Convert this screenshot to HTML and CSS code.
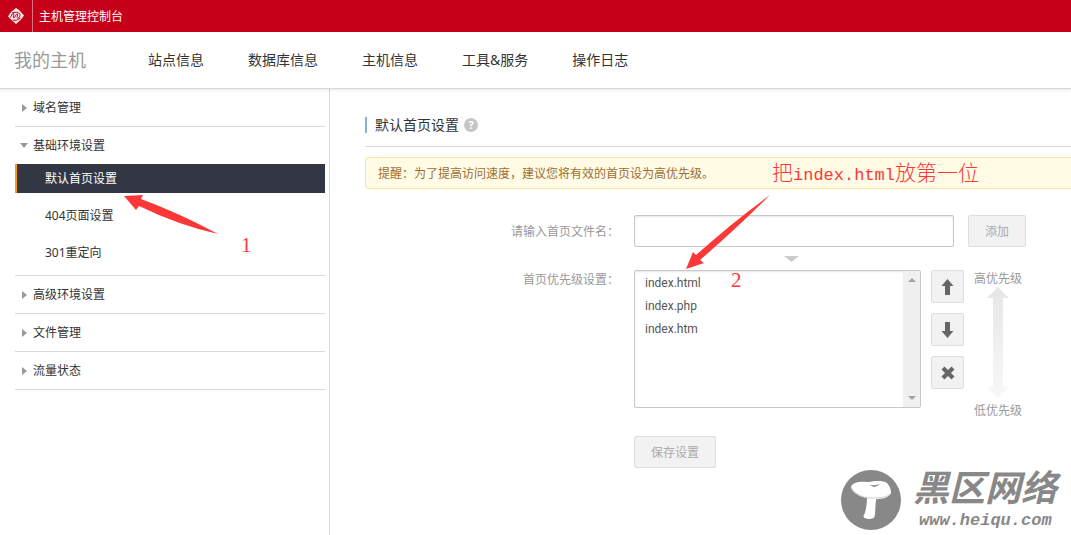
FILE: index.html
```html
<!DOCTYPE html>
<html lang="zh-CN">
<head>
<meta charset="utf-8">
<title>主机管理控制台</title>
<link rel="stylesheet" href="styles.css">
</head>
<body>
<header class="topbar">
  <a class="logo" href="#" aria-label="首页">
    <svg width="16" height="16" viewBox="0 0 16 16" aria-hidden="true"><path d="M8 0l3 2 5 5.500-3 4L8 16l-4-3.500L0 8.500 3 4z" fill="#fbe9eb"/><path d="M2.500 9.500q1.500-4.500 3-4c1.200.6-1 4.500.3 4.500s2-4.500 3.400-4-1.200 4.200.4 4.200 2.600-2 2.400-3.700q-.8-2-3.500-2.200T4 5M4.500 12.200q4 1 8-2" fill="none" stroke="#c70019"/></svg>
  </a>
  <span class="topbar-title">主机管理控制台</span>
</header>
<nav class="mainnav">
  <span class="mainnav-title">我的主机</span>
  <a href="#">站点信息</a>
  <a href="#">数据库信息</a>
  <a href="#">主机信息</a>
  <a href="#">工具&amp;服务</a>
  <a href="#">操作日志</a>
</nav>
<div class="layout">
  <aside class="sidebar">
    <section class="group"><button class="group-head" type="button"><i class="caret"></i>域名管理</button></section>
    <section class="group">
      <button class="group-head" type="button"><i class="caret caret-open"></i>基础环境设置</button>
      <div class="submenu">
        <a class="active" href="#">默认首页设置</a>
        <a href="#">404页面设置</a>
        <a href="#">301重定向</a>
      </div>
    </section>
    <section class="group"><button class="group-head" type="button"><i class="caret"></i>高级环境设置</button></section>
    <section class="group"><button class="group-head" type="button"><i class="caret"></i>文件管理</button></section>
    <section class="group"><button class="group-head" type="button"><i class="caret"></i>流量状态</button></section>
  </aside>
  <main class="content">
    <div class="heading">
      <h1>默认首页设置</h1>
      <button class="help" type="button" aria-label="帮助">?</button>
    </div>
    <p class="notice">提醒：为了提高访问速度，建议您将有效的首页设为高优先级。</p>
    <form class="form">
      <label for="filename">请输入首页文件名：</label>
      <div class="row">
        <input class="textbox" id="filename" type="text">
        <button class="btn btn-add" type="button">添加</button>
      </div>
      <div class="pointer"><svg width="15" height="6" viewBox="0 0 15 6" aria-hidden="true"><path d="M0 0h15L7.500 6z" fill="#ccc"/></svg></div>
      <label for="priority">首页优先级设置：</label>
      <div class="priority">
        <div class="listbox">
          <select id="priority" size="5">
            <option>index.html</option>
            <option>index.php</option>
            <option>index.htm</option>
          </select>
          <div class="track">
            <svg width="8" height="4" viewBox="0 0 8 4" aria-hidden="true"><path d="M0 4h8L4 0z" fill="#a3a3a3"/></svg>
            <svg width="8" height="4" viewBox="0 0 8 4" aria-hidden="true"><path d="M0 0h8L4 4z" fill="#a3a3a3"/></svg>
          </div>
        </div>
        <div class="tools">
          <button class="tool" type="button" aria-label="上移"><svg width="13" height="16" viewBox="0 0 13 16"><path d="M6.500 0L12.500 7H9v9H4V7H.5z" fill="#666"/></svg></button>
          <button class="tool" type="button" aria-label="下移"><svg width="13" height="16" viewBox="0 0 13 16"><path d="M6.500 16L12.500 9H9V0H4v9H.5z" fill="#666"/></svg></button>
          <button class="tool" type="button" aria-label="删除"><svg width="14" height="14" viewBox="0 0 14 14"><path d="M2 2l10 10m0-10L2 12" stroke="#666" stroke-width="4.200"/></svg></button>
        </div>
        <div class="scale">
          <span>高优先级</span>
          <svg width="22" height="111" viewBox="0 0 22 111" aria-hidden="true"><defs><linearGradient id="fade" x1="0" y1="0" x2="0" y2="1"><stop offset="0" stop-color="#e6e6e6"/><stop offset="1" stop-color="#f8f8f8"/></linearGradient></defs><path d="M11 0l11 11h-6v89h6l-11 11-11-11h6V11H0z" fill="url(#fade)"/></svg>
          <span>低优先级</span>
        </div>
      </div>
      <div class="actions"><button class="btn btn-save" type="button">保存设置</button></div>
    </form>
  </main>
</div>
<svg class="arrow arrow-one" width="94" height="41" viewBox="0 0 94 41" aria-hidden="true"><path d="M0 1l19-1-2 4q38 14 77 35Q54 30 15 11l-3 4z" fill="#fc3737"/></svg>
<span class="note note-one">1</span>
<svg class="arrow arrow-two" width="84" height="74" viewBox="0 0 84 74" aria-hidden="true"><path d="M0 74l7-17 3 3Q48 26 84 0 52 32 14 65l4 3z" fill="#fc3737"/></svg>
<span class="note note-text">把<span class="mono">index.html</span>放第一位</span>
<span class="note note-two">2</span>
<div class="watermark">
  <svg width="60" height="60" viewBox="0 0 60 60" aria-hidden="true"><circle cx="30" cy="30" r="30" fill="#888"/><path d="M26 26c0 9-1 15-3.500 20-.5 3.500 9.500 4 11 1 1.500-6 0-12 2.500-21z" fill="#fff"/><path d="M10 17c1-5 9-6 17-5 6-1 15-2 19 1 3 3 4 7 4 10-2 5-9 6-15 6-12 0-24-5-25-12z" fill="#fff"/><path d="M10.500 18c4 7 12 10 21 10 9 0 15-1 18-4" fill="none" stroke="#ccc" stroke-width="1"/><path d="M28 15q6 1 11-1-3 3-6 3z" fill="#888"/></svg>
  <div class="watermark-text"><strong>黑区网络</strong><span>www.heiqu.com</span></div>
</div>
</body>
</html>
```

FILE: styles.css
```css
* { box-sizing: border-box; }
body {
  margin: 0;
  min-height: 100vh;
  position: relative;
  display: flex;
  flex-direction: column;
  overflow: hidden;
  background: #fff;
  color: #333;
  font: 12px/20px "Noto Sans", "Noto Sans CJK SC", sans-serif;
}
a { color: inherit; text-decoration: none; }
button, input, select { font: inherit; color: inherit; margin: 0; }
button { padding: 0; border: 0; background: none; cursor: pointer; }

.topbar { display: flex; align-items: center; height: 32px; background: #c70019; color: #fff; }
.logo { display: flex; align-items: center; justify-content: center; width: 33px; height: 32px; border-right: 1px solid #e0737f; }
.topbar-title { margin-left: 6px; padding-top: 2px; }

.mainnav {
  display: flex;
  align-items: center;
  gap: 44px;
  height: 57px;
  padding-left: 14px;
  border-bottom: 1px solid #d9d9d9;
  box-shadow: 0 1px 3px rgba(0, 0, 0, .1);
  font-size: 14px;
  z-index: 1;
}
.mainnav-title { margin-right: 18px; color: #999; font-size: 18px; }

.layout { display: flex; flex: 1; }
.sidebar { width: 330px; flex: none; padding: 0 4px 0 15px; border-right: 1px solid #d9d9d9; }
.group { border-bottom: 1px solid #d9d9d9; }
.group-head { display: flex; align-items: center; width: 100%; height: 37px; padding-left: 5px; text-align: left; }
.caret { display: flex; justify-content: center; width: 8px; margin-right: 5px; }
.caret::before { content: ""; border: 4px solid transparent; border-left: 5px solid #999; border-right: 0; }
.caret-open::before { border: 4px solid transparent; border-top: 5px solid #999; border-bottom: 0; }
.submenu { display: flex; flex-direction: column; gap: 8px; padding-bottom: 8px; }
.submenu a { padding-left: 28px; border-left: 2px solid transparent; line-height: 29px; }
.submenu .active { background: #333744; border-left-color: #ff9c00; color: #fff; }

.content { flex: 1; min-width: 0; padding: 15px 0 0 35px; }
.heading { display: flex; align-items: center; gap: 5px; height: 43px; border-bottom: 1px solid #d9d9d9; }
.heading h1 { margin: 0; padding-left: 8px; border-left: 2px solid #84b3d9; font-size: 14px; font-weight: 400; line-height: 16px; }
.help { width: 14px; height: 14px; border-radius: 50%; background: #c6c6c6; color: #fff; font-size: 11px; font-weight: 700; line-height: 14px; }
.notice { margin: 10px 0 26px; padding: 6px 12px 4px; border: 1px solid #f8e3a8; border-right: 0; border-radius: 4px 0 0 4px; background: #fffbe5; color: #9d6e33; }

.form { display: grid; grid-template-columns: 254px 1fr; column-gap: 15px; }
.form > label { padding-top: 7px; color: #999; text-align: right; }
.form > label[for="priority"] { padding-top: 0; }
.row { display: flex; gap: 14px; }
.textbox { width: 320px; height: 32px; padding: 0 10px; border: 1px solid #c8c8c8; border-radius: 2px; box-shadow: inset 0 1px 2px rgba(0, 0, 0, .1); }
.btn { height: 32px; padding-top: 2px; border: 1px solid #ddd; border-radius: 2px; background: #f2f2f2; color: #aaa; }
.btn-add { width: 58px; }
.btn-save { width: 82px; }
.pointer { grid-column: 2; display: flex; align-items: center; justify-content: center; width: 315px; height: 23px; }
.priority { display: flex; align-items: flex-start; gap: 10px; }
.listbox { display: flex; width: 287px; height: 138px; border: 1px solid #c8c8c8; border-radius: 2px; box-shadow: inset 0 1px 2px rgba(0, 0, 0, .1); }
.listbox select { flex: 1; margin-top: 5px; padding: 0; border: 0; outline: 0; background: transparent; color: #555; font-family: Roboto, sans-serif; overflow: hidden; scrollbar-width: none; }
.listbox option { min-height: 23px; padding: 0 10px; line-height: 23px; }
.track { display: flex; flex-direction: column; align-items: center; justify-content: space-between; width: 17px; padding: 7px 0; background: #f0f0f0; }
.tools { display: flex; flex-direction: column; gap: 10px; }
.tool { display: flex; align-items: center; justify-content: center; width: 33px; height: 33px; border: 1px solid #ddd; border-radius: 2px; background: #f2f2f2; }
.scale { display: flex; flex-direction: column; align-items: center; color: #999; }
.scale span:first-child { line-height: 17px; }
.scale span:last-child { line-height: 26px; }
.actions { grid-column: 2; padding-top: 12px; }

.arrow, .note { position: absolute; }
.arrow-one { left: 124px; top: 195px; }
.arrow-two { left: 686px; top: 195px; }
.note { color: #fc3737; font: 300 21px/24px "Liberation Serif", "Noto Sans CJK SC", serif; }
.note-one { left: 241px; top: 233px; }
.note-text { left: 772px; top: 161px; white-space: nowrap; }
.note-two { left: 731px; top: 268px; }
.mono { font-family: "Liberation Mono", monospace; font-size: 17px; }

.watermark { position: absolute; right: 14px; bottom: 5px; display: flex; align-items: center; gap: 12px; color: #888; }
.watermark-text { display: flex; flex-direction: column; gap: 8px; font-style: italic; }
.watermark-text strong { font-size: 36px; font-weight: 700; line-height: 34px; }
.watermark-text span { padding-left: 6px; font: italic bold 17px/16px "Liberation Mono", monospace; }
```
